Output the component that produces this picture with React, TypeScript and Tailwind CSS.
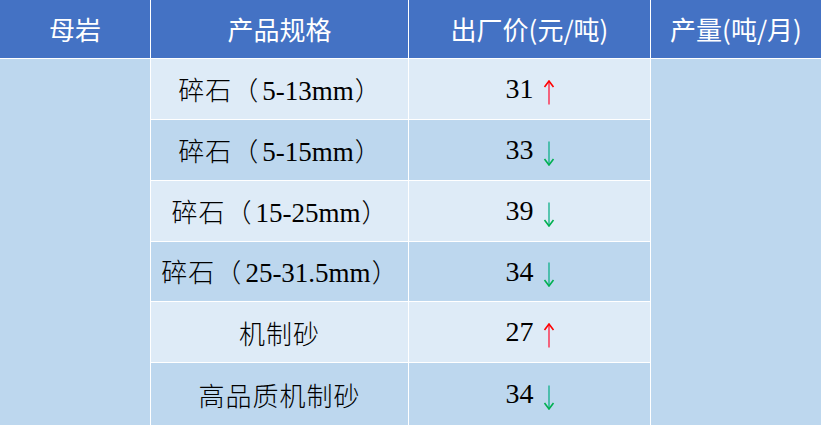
import React from "react";

const LIGHT = "bg-[#DEEBF7]";
const DARK = "bg-[#BDD7EE]";

function UpArrow() {
  return (
    <svg width="12" height="25" viewBox="0 0 12 25" className="mt-[6px] ml-[9px]">
      <line x1="6" y1="1.5" x2="6" y2="24.5" stroke="#FF1A3C" strokeWidth="1.3" />
      <path d="M1.5 7 L6 1 L10.5 7" fill="none" stroke="#FF0000" strokeWidth="1.6" strokeLinejoin="miter" />
    </svg>
  );
}

function DownArrow() {
  return (
    <svg width="12" height="25" viewBox="0 0 12 25" className="mt-[6px] ml-[9px]">
      <line x1="6" y1="0.5" x2="6" y2="23.5" stroke="#10B08A" strokeWidth="1.3" />
      <path d="M1.5 18 L6 24 L10.5 18" fill="none" stroke="#00B050" strokeWidth="1.6" strokeLinejoin="miter" />
    </svg>
  );
}

type Row = { cjk: string; latin?: string; price: string; up: boolean };

const rows: Row[] = [
  { cjk: "碎石", latin: "5-13mm", price: "31", up: true },
  { cjk: "碎石", latin: "5-15mm", price: "33", up: false },
  { cjk: "碎石", latin: "15-25mm", price: "39", up: false },
  { cjk: "碎石", latin: "25-31.5mm", price: "34", up: false },
  { cjk: "机制砂", price: "27", up: true },
  { cjk: "高品质机制砂", price: "34", up: false },
];

const serif = "font-['Liberation_Serif',serif]";
const cjkFont = "font-['Noto_Sans_CJK_SC',sans-serif]";
const headFont = "font-['Noto_Sans_CJK_SC','Noto_Sans',sans-serif]";

export default function App() {
  return (
    <div className="grid h-[425px] w-[821px] gap-px bg-white grid-cols-[150px_257px_241px_170px] grid-rows-[58px_60px_60px_60px_59px_60px_1fr] overflow-hidden">
      {["母岩", "产品规格", "出厂价(元/吨)", "产量(吨/月)"].map((h) => (
        <div
          key={h}
          className={`flex items-center justify-center bg-[#4472C4] text-white text-[26px] leading-none ${headFont}`}
        >
          {h}
        </div>
      ))}
      <div className={`${DARK} col-start-1 row-start-2 row-span-6`} />
      {rows.map((r, i) => {
        const bg = i % 2 === 0 ? LIGHT : DARK;
        return (
          <React.Fragment key={i}>
            <div
              className={`${bg} col-start-2 flex items-center justify-center text-black`}
              style={{ gridRowStart: i + 2 }}
            >
              <span className="whitespace-nowrap leading-none mt-[2px]">
                <span className={`${cjkFont} font-light text-[26px] tracking-[1px]`}>{r.cjk}</span>
                {r.latin && (
                  <>
                    <span className={`${cjkFont} font-light text-[26px]`}>（</span>
                    <span className={`${serif} text-[27px] ml-[4px] mr-[1px]`}>{r.latin}</span>
                    <span className={`${cjkFont} font-light text-[26px]`}>）</span>
                  </>
                )}
              </span>
            </div>
            <div
              className={`${bg} col-start-3 flex items-center justify-center leading-none text-black`}
              style={{ gridRowStart: i + 2 }}
            >
              <span className={`${serif} text-[28px] ml-[1px]`}>{r.price}</span>
              {r.up ? <UpArrow /> : <DownArrow />}
            </div>
          </React.Fragment>
        );
      })}
      <div className={`${DARK} col-start-4 row-start-2 row-span-6`} />
    </div>
  );
}
